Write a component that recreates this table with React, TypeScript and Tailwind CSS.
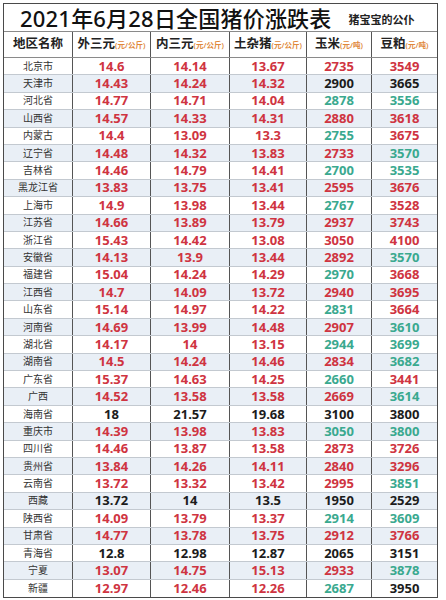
import React from 'react'

type Tone = 'r' | 'g' | 'k'

// region, then [value, colour] for each of the five price columns
const rows: [string, [string, Tone][]][] = [
  ['北京市', [['14.6', 'r'], ['14.14', 'r'], ['13.67', 'r'], ['2735', 'r'], ['3549', 'r']]],
  ['天津市', [['14.43', 'r'], ['14.24', 'r'], ['14.32', 'r'], ['2900', 'k'], ['3665', 'k']]],
  ['河北省', [['14.77', 'r'], ['14.71', 'r'], ['14.04', 'r'], ['2878', 'g'], ['3556', 'g']]],
  ['山西省', [['14.57', 'r'], ['14.33', 'r'], ['14.31', 'r'], ['2880', 'r'], ['3618', 'r']]],
  ['内蒙古', [['14.4', 'r'], ['13.09', 'r'], ['13.3', 'r'], ['2755', 'g'], ['3675', 'r']]],
  ['辽宁省', [['14.48', 'r'], ['14.32', 'r'], ['13.83', 'r'], ['2733', 'r'], ['3570', 'g']]],
  ['吉林省', [['14.46', 'r'], ['14.79', 'r'], ['14.41', 'r'], ['2700', 'g'], ['3535', 'g']]],
  ['黑龙江省', [['13.83', 'r'], ['13.75', 'r'], ['13.41', 'r'], ['2595', 'r'], ['3676', 'r']]],
  ['上海市', [['14.9', 'r'], ['13.98', 'r'], ['13.44', 'r'], ['2767', 'g'], ['3528', 'r']]],
  ['江苏省', [['14.66', 'r'], ['13.89', 'r'], ['13.79', 'r'], ['2937', 'r'], ['3743', 'r']]],
  ['浙江省', [['15.43', 'r'], ['14.42', 'r'], ['13.08', 'r'], ['3050', 'r'], ['4100', 'r']]],
  ['安徽省', [['14.13', 'r'], ['13.9', 'r'], ['13.44', 'r'], ['2892', 'r'], ['3570', 'g']]],
  ['福建省', [['15.04', 'r'], ['14.24', 'r'], ['14.29', 'r'], ['2970', 'g'], ['3668', 'r']]],
  ['江西省', [['14.7', 'r'], ['14.09', 'r'], ['13.72', 'r'], ['2940', 'r'], ['3695', 'r']]],
  ['山东省', [['15.14', 'r'], ['14.97', 'r'], ['14.22', 'r'], ['2831', 'g'], ['3664', 'r']]],
  ['河南省', [['14.69', 'r'], ['13.99', 'r'], ['14.48', 'r'], ['2907', 'r'], ['3610', 'g']]],
  ['湖北省', [['14.17', 'r'], ['14', 'r'], ['13.15', 'r'], ['2944', 'g'], ['3699', 'g']]],
  ['湖南省', [['14.5', 'r'], ['14.24', 'r'], ['14.46', 'r'], ['2834', 'r'], ['3682', 'g']]],
  ['广东省', [['15.37', 'r'], ['14.63', 'r'], ['14.25', 'r'], ['2660', 'g'], ['3441', 'r']]],
  ['广西', [['14.52', 'r'], ['13.58', 'r'], ['13.58', 'r'], ['2669', 'r'], ['3614', 'g']]],
  ['海南省', [['18', 'k'], ['21.57', 'k'], ['19.68', 'k'], ['3100', 'k'], ['3800', 'k']]],
  ['重庆市', [['14.39', 'r'], ['13.98', 'r'], ['13.83', 'r'], ['3050', 'g'], ['3800', 'g']]],
  ['四川省', [['14.46', 'r'], ['13.87', 'r'], ['13.58', 'r'], ['2873', 'r'], ['3726', 'r']]],
  ['贵州省', [['13.84', 'r'], ['14.26', 'r'], ['14.11', 'r'], ['2840', 'r'], ['3296', 'r']]],
  ['云南省', [['13.72', 'r'], ['13.32', 'r'], ['13.42', 'r'], ['2995', 'r'], ['3851', 'g']]],
  ['西藏', [['13.72', 'k'], ['14', 'k'], ['13.5', 'k'], ['1950', 'k'], ['2529', 'k']]],
  ['陕西省', [['14.09', 'r'], ['13.79', 'r'], ['13.37', 'r'], ['2914', 'g'], ['3609', 'g']]],
  ['甘肃省', [['14.77', 'r'], ['13.78', 'r'], ['13.75', 'r'], ['2912', 'r'], ['3766', 'r']]],
  ['青海省', [['12.8', 'k'], ['12.98', 'k'], ['12.87', 'k'], ['2065', 'k'], ['3151', 'k']]],
  ['宁夏', [['13.07', 'r'], ['14.75', 'r'], ['15.13', 'r'], ['2933', 'r'], ['3878', 'g']]],
  ['新疆', [['12.97', 'r'], ['12.46', 'r'], ['12.26', 'r'], ['2687', 'g'], ['3950', 'k']]],
]

const toneClass: Record<Tone, string> = {
  r: 'text-[#cf3441]',
  g: 'text-[#3aa98f]',
  k: 'text-[#1c1c1c]',
}

const cols = 'grid grid-cols-[69px_78px_79px_77px_65px_65px]'

const headers: [string, string][] = [
  ['外三元', '(元/公斤)'],
  ['内三元', '(元/公斤)'],
  ['土杂猪', '(元/公斤)'],
  ['玉米', '(元/吨)'],
  ['豆粕', '(元/吨)'],
]

const App: React.FC = () => {
  return (
    <div
      className="w-[446px] h-[600px] bg-white pt-[3px] pl-[3px]"
      style={{ fontFamily: '"Noto Sans", "Noto Sans CJK SC", sans-serif' }}
    >
      <div className="w-[435px] border border-[#4a4a4a] bg-white">
        {/* Title */}
        <div className="h-[28px] flex items-center pl-[16px] border-b border-[#8a8a8a]">
          <span className="text-[22px] font-medium text-[#111] leading-none tracking-[0.2px]">
            2021年6月28日全国猪价涨跌表
          </span>
          <span className="ml-[17px] mt-[4px] text-[11px] font-semibold text-[#222] leading-none">
            猪宝宝的公仆
          </span>
        </div>

        {/* Header */}
        <div className={`${cols} h-[26px] border-b border-[#8a8a8a]`}>
          <div className="flex items-center justify-center border-r border-[#555] text-[12.5px] font-bold text-[#222]">
            地区名称
          </div>
          {headers.map(([name, unit], i) => (
            <div
              key={name}
              className={`flex items-center justify-center ${
                i < headers.length - 1 ? 'border-r border-[#555]' : ''
              }`}
            >
              <span className="text-[12.5px] font-bold text-[#222]">{name}</span>
              <span className="text-[7.5px] font-semibold text-[#e0873a] mt-[2px]">{unit}</span>
            </div>
          ))}
        </div>

        {/* Rows */}
        {rows.map(([region, vals], idx) => (
          <div
            key={region}
            className={`${cols} h-[17.4px] border-b border-[#c3c9d0] last:border-b-0 ${
              idx % 2 === 1 ? 'bg-[#e9eff6]' : 'bg-white'
            }`}
          >
            <div className="flex items-center justify-center border-r border-[#555] text-[10px] text-[#333]">
              {region}
            </div>
            {vals.map(([v, t], i) => (
              <div
                key={i}
                className={`flex items-center justify-center text-[13px] font-bold leading-none ${toneClass[t]} ${
                  i < vals.length - 1 ? 'border-r border-[#555]' : ''
                }`}
              >
                {v}
              </div>
            ))}
          </div>
        ))}
      </div>
    </div>
  )
}

export default App
